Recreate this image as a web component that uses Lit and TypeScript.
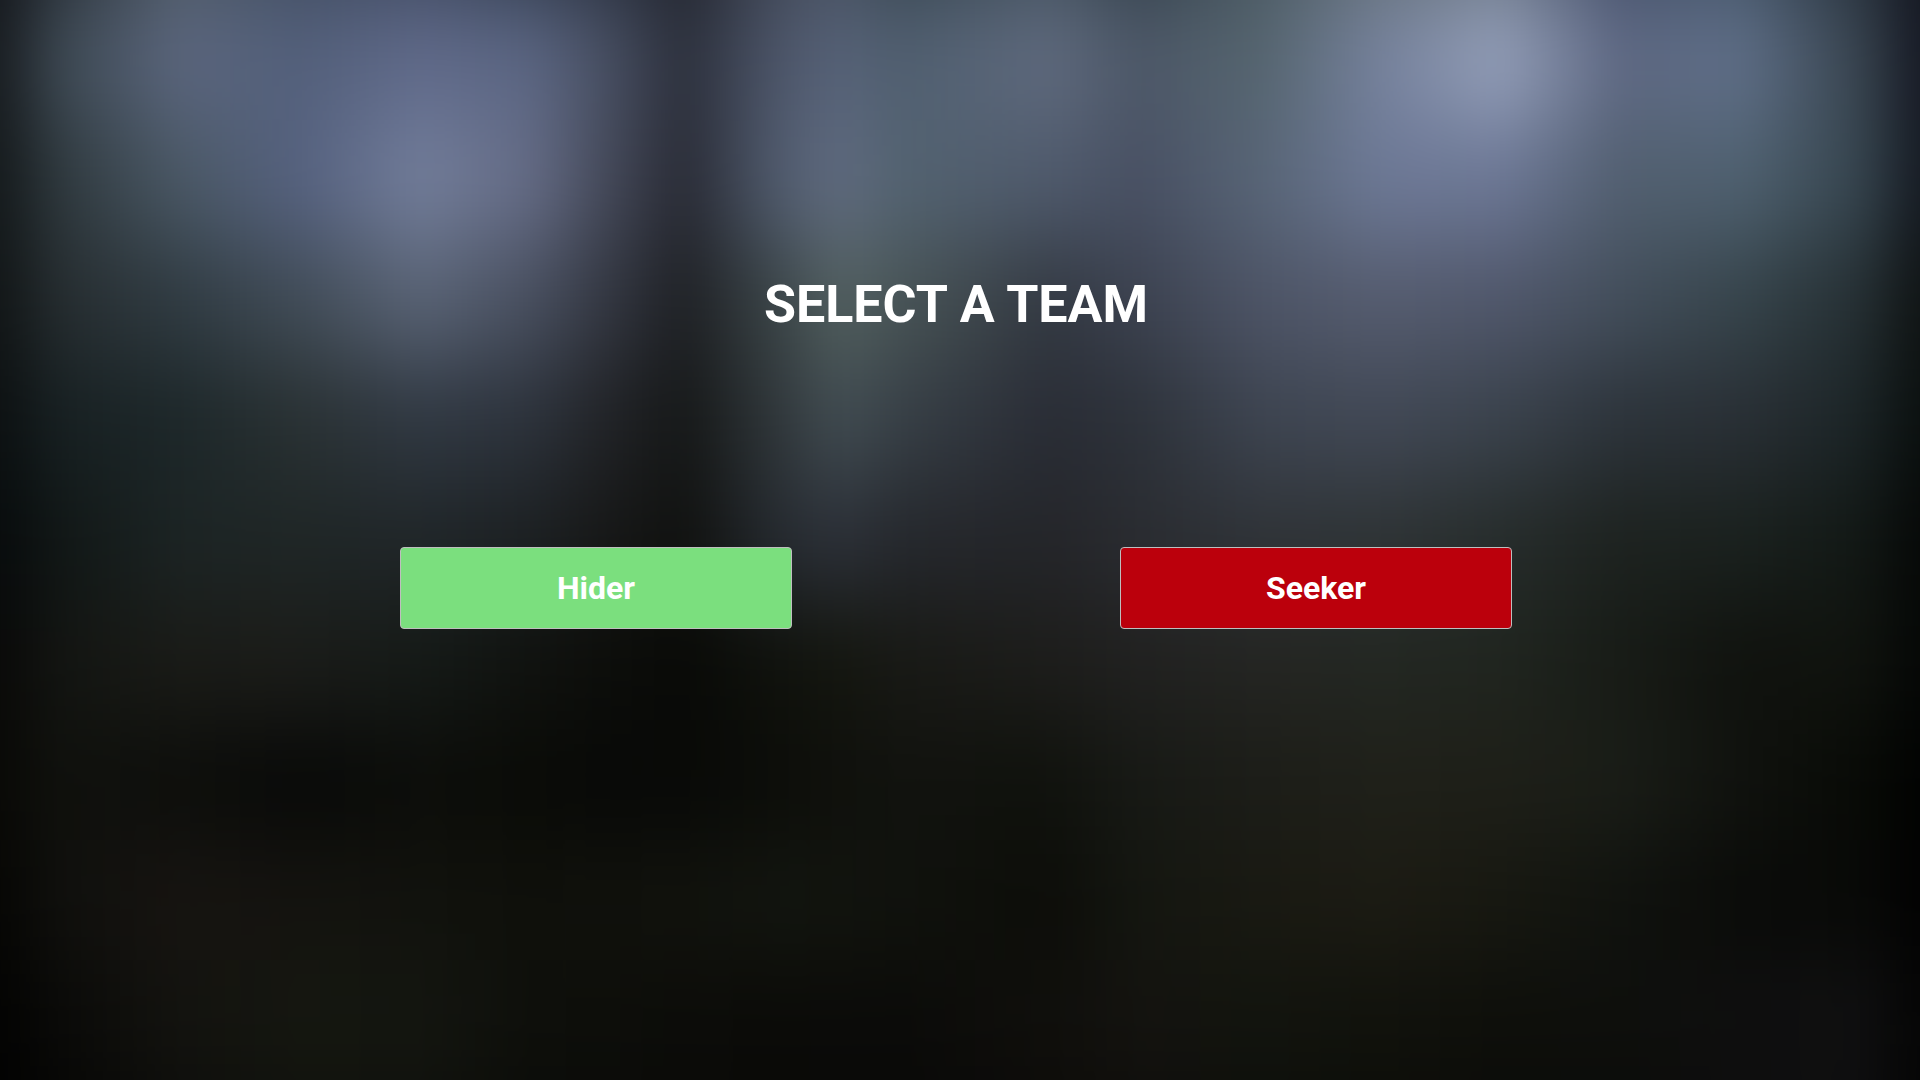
import { LitElement, html, svg, css } from "lit";
import { customElement, property } from "lit/decorators.js";

// Horizontal positions of the colour stops in every band of the backdrop.
const STOPS = [0, 60, 180, 300, 420, 530, 600, 684, 780, 840, 900, 1050, 1140, 1260, 1380, 1500, 1620, 1740, 1860, 1920];

// One string per band, top to bottom; the first and last bands bleed past the edges.
const BANDS = [
  "14171c 2a3139 4f5b66 414c60 3e485e 303a4a 2a3140 22252e 414857 47505f 384550 44525f 33404a 4a5862 66727a 6c7786 45506a 455668 27313c 141720",
  "181c20 3e4a54 5b667e 53607b 606a8a 5b6683 4a5266 2c303c 4d566a 566278 505f70 5f6a7e 4d5868 55656f 76829d 95a0ba 5f6984 5f6f88 38444f 161924",
  "14191b 2f393e 4a5865 566280 737e9b 656c86 474c5d 282a34 525d70 606b80 536371 4f5a6c 485063 586577 6d7996 6c7795 525f70 4f6170 36454f 151a22",
  "111516 262d30 303b42 414c57 596375 484f5f 353944 1e2024 3c4649 52605f 485456 333942 3c4250 4d5466 555c6f 50576b 434e5b 36444b 252f33 0f1313",
  "0c1011 172022 1d2729 293133 303842 2c323b 222428 151717 31383c 414c52 373f46 292c35 2d323a 3d4450 414855 3a424c 2c333a 292f35 1b2426 0a0f0e",
  "070b0c 111716 1c2424 1f2626 202629 1c2022 171818 10110f 262b31 2c3038 25282d 242529 2a2c31 2f3338 2e3335 262c2b 1d221f 1a211e 121815 060807",
  "090908 131512 1a1b17 1b1c19 151a17 10120f 0d0e0b 090a07 10120d 14160f 181915 1d1d1b 212120 242522 232722 20251f 171b16 10120e 10130e 050706",
  "090906 10110d 0d0e0b 080908 0c0d0a 0a0b07 080907 080907 0c0d09 0f100c 11120e 10120d 171915 1c1d18 1f2019 1e1f18 1a1d17 10120e 080a06 010201",
  "060604 10100d 171411 14130f 11120d 0f100b 10110c 11120d 12150f 12140e 10120d 0c0d09 141610 191912 1c1b13 171811 10120e 0a0b09 080907 020202",
  "030302 0a0a08 13130f 151710 141610 0e0f0b 0d0e0a 0c0c09 0b0b08 0b0b09 0b0b09 100f0c 14130f 12140e 11120c 0e0f0b 0e0f0c 0f0f0f 101011 050505",
  "010101 050504 0c0c0a 0f100b 0e0f0b 0a0b08 0a0a08 090907 080806 080807 080807 0b0a08 0e0d0b 0c0d0a 0b0c08 0a0a08 0a0a09 0c0c0c 0d0d0e 040404",
].map((band) => band.split(" "));

@customElement("blurred-backdrop")
class BlurredBackdrop extends LitElement {
  static styles = css`
    :host { display: block; overflow: hidden; background: #000; }
    .scene { display: block; width: 100%; height: 100%; }
  `;

  render() {
    return html`
      <svg class="scene" viewBox="0 0 1920 1080" preserveAspectRatio="none" aria-hidden="true">
        <defs>
          <filter id="soften" filterUnits="userSpaceOnUse" x="-120" y="-120" width="2160" height="1320" color-interpolation-filters="sRGB">
            <feGaussianBlur stdDeviation="22 44"></feGaussianBlur>
          </filter>
          ${BANDS.map((band, i) => svg`
            <linearGradient id="band-${i}" gradientUnits="userSpaceOnUse" x1="0" y1="0" x2="1920" y2="0">
              ${band.map((color, j) => svg`<stop offset=${STOPS[j] / 1920} stop-color="#${color}"></stop>`)}
            </linearGradient>`)}
        </defs>
        <g filter="url(#soften)" shape-rendering="crispEdges">
          ${BANDS.map((_, i) => svg`<rect x="-120" y=${(i - 1) * 120} width="2160" height="120" fill="url(#band-${i})"></rect>`)}
        </g>
      </svg>
    `;
  }
}

@customElement("team-button")
class TeamButton extends LitElement {
  @property() name = "";
  @property({ reflect: true }) tone = "green";

  static styles = css`
    :host { display: flex; justify-content: center; }
    .team {
      box-sizing: border-box;
      width: 392px;
      max-width: 100%;
      padding: 20px;
      border: 1px solid #bebebe;
      border-radius: 4px;
      background: #7bdf7e;
      color: #fff;
      font: 700 32px/40px Roboto, "Liberation Sans", sans-serif;
      text-align: center;
      cursor: pointer;
    }
    :host([tone="red"]) .team { background: #bb000c; }
  `;

  render() {
    return html`<button class="team" type="button">${this.name}</button>`;
  }
}

@customElement("app-root")
class AppRoot extends LitElement {
  static styles = css`
    :host { display: grid; min-height: 100vh; overflow: hidden; }
    .backdrop, .screen { grid-area: 1 / 1; }
    .screen {
      z-index: 1;
      display: flex;
      flex-direction: column;
      align-items: center;
      gap: 210px;
      padding: 273px 8px 0 0;
    }
    .title {
      margin: 0;
      color: #fff;
      font: 700 52px/64px Roboto, "Liberation Sans", sans-serif;
      text-align: center;
    }
    .teams {
      display: grid;
      grid-template-columns: 1fr 1fr;
      width: 100%;
      max-width: 1440px;
    }
  `;

  render() {
    return html`
      <blurred-backdrop class="backdrop"></blurred-backdrop>
      <main class="screen">
        <h1 class="title">SELECT A TEAM</h1>
        <div class="teams">
          <team-button name="Hider" tone="green"></team-button>
          <team-button name="Seeker" tone="red"></team-button>
        </div>
      </main>
    `;
  }
}
